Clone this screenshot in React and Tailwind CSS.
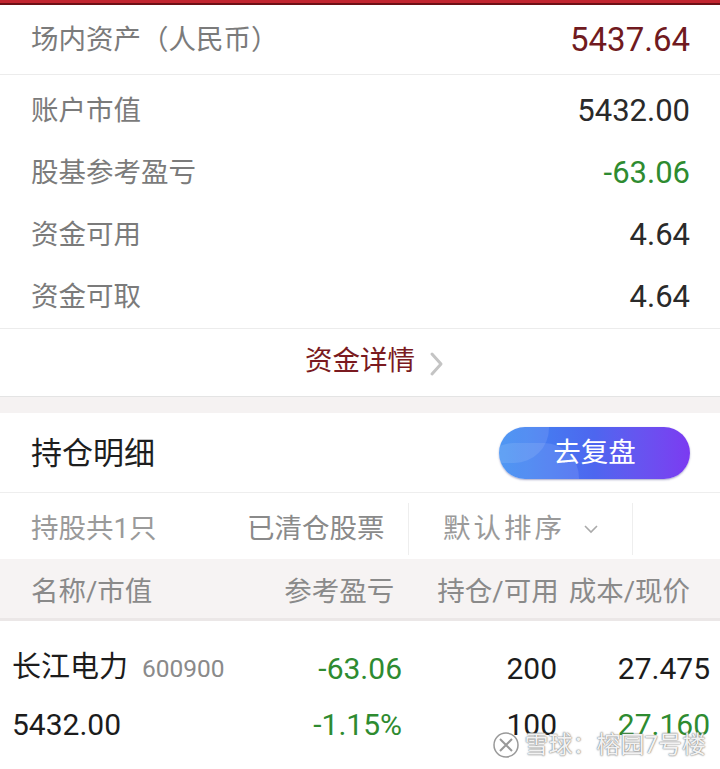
import React from "react";

const F = { fontFamily: 'Roboto, "Noto Sans CJK SC", "Noto Sans", sans-serif' };

function InfoRow({ label, value, color }) {
  return (
    <div className="flex h-[62px] items-center justify-between pl-[31px] pr-[30px]">
      <span className="text-[27.5px] text-[#7b7b7b]">{label}</span>
      <span className={"text-[31px] " + color}>{value}</span>
    </div>
  );
}

export default function App() {
  return (
    <div className="w-[720px] h-[769px] overflow-hidden bg-white relative" style={F}>
      <div className="h-[3px] bg-[#c22530]" />
      <div className="h-[2px] bg-[#6e1016]" />
      <div className="flex h-[70px] items-center justify-between border-b border-[#ececec] pl-[31px] pr-[30px]">
        <span className="text-[27.5px] text-[#7b7b7b]">场内资产（人民币）</span>
        <span className="text-[33px] text-[#701a20]">5437.64</span>
      </div>
      <div className="pt-[5px] border-b border-[#ececec]">
        <InfoRow label="账户市值" value="5432.00" color="text-[#2a2a2a]" />
        <InfoRow label="股基参考盈亏" value="-63.06" color="text-[#2e8b30]" />
        <InfoRow label="资金可用" value="4.64" color="text-[#2a2a2a]" />
        <InfoRow label="资金可取" value="4.64" color="text-[#2a2a2a]" />
      </div>
      <div className="flex h-[68px] items-center justify-center gap-[14px] border-b border-[#e4e4e4]">
        <span className="text-[27.5px] text-[#7a1a20] ml-[30px] pb-[4px]">资金详情</span>
        <svg width="16" height="28" viewBox="0 0 16 28" className="mt-[2px]">
          <path d="M3 4 L12 14 L3 24" fill="none" stroke="#c4c4c4" strokeWidth="3" strokeLinecap="round" strokeLinejoin="round" />
        </svg>
      </div>
      <div className="h-[16px] bg-[#f5f2f2]" />
      <div className="flex h-[80px] items-center justify-between border-b border-[#eeeeee] pl-[31px] pr-[30px]">
        <span className="text-[31px] text-[#1e1e1e] pt-[4px]">持仓明细</span>
        <div className="relative flex h-[52px] w-[191px] items-center justify-center overflow-hidden rounded-full bg-gradient-to-r from-[#3b8cf2] via-[#4d66ef] to-[#7b3af1] shadow-[0_1px_2px_rgba(40,40,120,0.4)]">
          <div className="absolute left-[-20px] top-[16px] h-[70px] w-[100px] rounded-full bg-white/10" />
          <div className="absolute left-[-30px] top-[-34px] h-[70px] w-[80px] rounded-full bg-white/10" />
          <span className="relative text-[27.5px] text-white">去复盘</span>
        </div>
      </div>
      <div className="flex h-[66px] items-center">
        <span className="w-[247px] pl-[31px] pt-[6px] text-[27.5px] text-[#9a9a9a]">持股共1只</span>
        <span className="w-[161px] pt-[6px] text-[27.5px] text-[#8a8a8a]">已清仓股票</span>
        <div className="h-[52px] w-px self-end mb-[4px] bg-[#eeeeee]" />
        <div className="flex w-[223px] items-center pl-[34px] pt-[6px]">
          <span className="text-[27.5px] text-[#9a9a9a] tracking-[3px]">默认排序</span>
          <svg width="16" height="10" viewBox="0 0 16 10" className="ml-[18px]">
            <path d="M2 2 L8 8 L14 2" fill="none" stroke="#aaaaaa" strokeWidth="1.6" />
          </svg>
        </div>
        <div className="h-[52px] w-px self-end mb-[4px] bg-[#eeeeee]" />
      </div>
      <div className="flex h-[62px] items-center border-b-[3px] border-[#ebe7e7] bg-[#f6f3f3] pl-[31px] pr-[30px] text-[27.5px] text-[#8a8a8a]">
        <span className="flex-1 pt-[6px]">名称/市值</span>
        <span className="mr-[43px] pt-[6px]">参考盈亏</span>
        <span className="mr-[10px] pt-[6px]">持仓/可用</span>
        <span className="pt-[6px]">成本/现价</span>
      </div>
      <div className="pt-[19px]">
        <div className="flex h-[56px] items-center">
          <div className="flex w-[260px] items-baseline pl-[12px]">
            <span className="text-[29px] text-[#1c1c1c]">长江电力</span>
            <span className="ml-[14px] text-[24.5px] text-[#8a8a8a]">600900</span>
          </div>
          <span className="w-[142px] text-right text-[30px] text-[#2e8b30]">-63.06</span>
          <span className="w-[155px] text-right text-[30px] text-[#1c1c1c]">200</span>
          <span className="w-[153px] text-right text-[30px] text-[#1c1c1c]">27.475</span>
        </div>
        <div className="flex h-[56px] items-center">
          <span className="w-[260px] pl-[12px] text-[30px] text-[#1c1c1c]">5432.00</span>
          <span className="w-[142px] text-right text-[30px] text-[#2e8b30]">-1.15%</span>
          <span className="w-[155px] text-right text-[30px] text-[#1c1c1c]">100</span>
          <span className="w-[153px] text-right text-[30px] text-[#2e8b30]">27.160</span>
        </div>
      </div>
      <div className="absolute bottom-[6px] right-[14px] flex items-center gap-[4px] text-[24px] text-white/90 [text-shadow:0_0_2px_#777,0_0_1px_#777]">
        <svg width="30" height="30" viewBox="0 0 30 30">
          <circle cx="15" cy="15" r="12" fill="none" stroke="#999" strokeWidth="1.5" />
          <path d="M9 9 L21 21 M21 9 L9 21" stroke="#999" strokeWidth="2" />
        </svg>
        <span>雪球：榕园7号楼</span>
      </div>
    </div>
  );
}
